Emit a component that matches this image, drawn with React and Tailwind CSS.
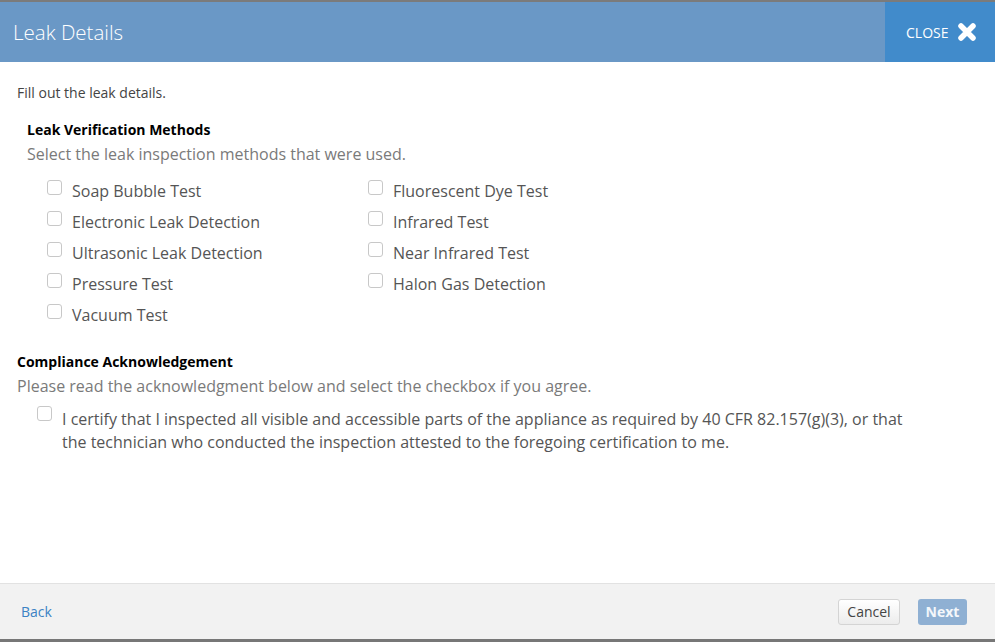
import React from "react";

const leftMethods = [
  "Soap Bubble Test",
  "Electronic Leak Detection",
  "Ultrasonic Leak Detection",
  "Pressure Test",
  "Vacuum Test",
];
const rightMethods = [
  "Fluorescent Dye Test",
  "Infrared Test",
  "Near Infrared Test",
  "Halon Gas Detection",
];

function Box() {
  return (
    <span className="mt-[0px] block h-[15px] w-[15px] shrink-0 rounded-[3px] border border-[#c8c8c8] bg-white" />
  );
}

function Method({ label }) {
  return (
    <label className="flex h-[31px] items-start gap-[10px] pt-[4px]">
      <Box />
      <span className="text-[16px] leading-[22px] text-[#555]">{label}</span>
    </label>
  );
}

export default function App() {
  return (
    <div
      className="flex h-[642px] w-[995px] flex-col bg-white"
      style={{ fontFamily: '"Open Sans", "Noto Sans", sans-serif' }}
    >
      <div className="h-[2px] bg-[#7b7b7b]" />
      <header className="flex h-[60px] items-stretch bg-[#6a98c6]">
        <h1 className="flex flex-1 items-center pl-[13px] text-[20.5px] font-light text-white">
          Leak Details
        </h1>
        <button className="flex w-[110px] items-center gap-[9px] bg-[#418bcb] pl-[21px] text-[14px] text-white">
          CLOSE
          <svg width="20" height="20" viewBox="0 0 20 20">
            <path
              d="M4 4 L16 16 M16 4 L4 16"
              stroke="white"
              strokeWidth="5.5"
              strokeLinecap="round"
            />
          </svg>
        </button>
      </header>

      <main className="flex-1 px-[17px] pt-[22px]">
        <p className="text-[14px] leading-[18px] text-[#444]">Fill out the leak details.</p>

        <section className="ml-[10px] mt-[18px]">
          <h2 className="text-[14px] font-bold leading-[20px] text-black">
            Leak Verification Methods
          </h2>
          <p className="mt-[2px] text-[16px] leading-[24px] text-[#7a7a7a]">
            Select the leak inspection methods that were used.
          </p>
          <div className="mt-[10px] ml-[20px] grid grid-cols-[321px_1fr]">
            <div className="flex flex-col">
              {leftMethods.map((m) => (
                <Method key={m} label={m} />
              ))}
            </div>
            <div className="flex flex-col">
              {rightMethods.map((m) => (
                <Method key={m} label={m} />
              ))}
            </div>
          </div>
        </section>

        <section className="mt-[21px]">
          <h2 className="text-[14px] font-bold leading-[20px] text-black">
            Compliance Acknowledgement
          </h2>
          <p className="mt-[2px] text-[16px] leading-[24px] text-[#7a7a7a]">
            Please read the acknowledgment below and select the checkbox if you agree.
          </p>
          <label className="ml-[20px] mt-[10px] flex items-start gap-[10px]">
            <span className="mt-[-2px] block h-[15px] w-[15px] shrink-0 rounded-[3px] border border-[#c8c8c8] bg-white" />
            <span className="w-[850px] text-[16px] leading-[23px] text-[#555]">
              I certify that I inspected all visible and accessible parts of the appliance as
              required by 40 CFR 82.157(g)(3), or that the technician who conducted the
              inspection attested to the foregoing certification to me.
            </span>
          </label>
        </section>
      </main>

      <footer className="flex h-[56px] items-center border-t border-[#e2e2e2] bg-[#f2f2f2] pl-[21px] pr-[28px]">
        <a className="text-[14px] text-[#3c82c4]">Back</a>
        <div className="ml-auto flex items-center gap-[18px]">
          <button className="h-[26px] w-[62px] rounded-[3px] border border-[#d4d4d4] bg-gradient-to-b from-white to-[#ececec] text-[14px] text-[#444]">
            Cancel
          </button>
          <button className="h-[26px] w-[49px] rounded-[3px] bg-[#8fb0d3] text-[14px] font-bold text-white/90">
            Next
          </button>
        </div>
      </footer>
      <div className="h-[3px] bg-[#777]" />
    </div>
  );
}
